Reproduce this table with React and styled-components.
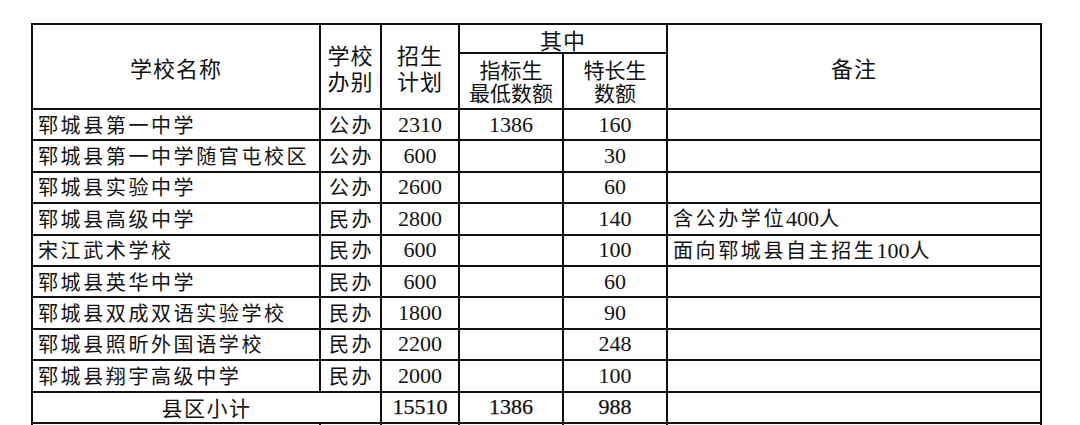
import styled, { createGlobalStyle } from 'styled-components';

const GlobalStyle = createGlobalStyle`
  html, body {
    margin: 0;
    padding: 0;
    background: #fff;
    height: 425px;
    overflow: hidden;
  }
  body {
    font-family: "Noto Sans CJK SC", "Noto Sans", sans-serif;
    color: #111;
  }
`;

const schools = [
  { name: '郓城县第一中学', type: '公办', plan: '2310', quota: '1386', special: '160', note: '' },
  { name: '郓城县第一中学随官屯校区', type: '公办', plan: '600', quota: '', special: '30', note: '' },
  { name: '郓城县实验中学', type: '公办', plan: '2600', quota: '', special: '60', note: '' },
  { name: '郓城县高级中学', type: '民办', plan: '2800', quota: '', special: '140', note: '含公办学位400人' },
  { name: '宋江武术学校', type: '民办', plan: '600', quota: '', special: '100', note: '面向郓城县自主招生100人' },
  { name: '郓城县英华中学', type: '民办', plan: '600', quota: '', special: '60', note: '' },
  { name: '郓城县双成双语实验学校', type: '民办', plan: '1800', quota: '', special: '90', note: '' },
  { name: '郓城县照昕外国语学校', type: '民办', plan: '2200', quota: '', special: '248', note: '' },
  { name: '郓城县翔宇高级中学', type: '民办', plan: '2000', quota: '', special: '100', note: '' },
];

// 备注里数字和汉字字体不同，拆开排
function Note({ text }) {
  const parts = text.split(/(\d+)/).filter(Boolean);
  return parts.map((p, i) => (/^\d+$/.test(p) ? <Num key={i}>{p}</Num> : <span key={i}>{p}</span>));
}

export default function App() {
  return (
    <>
      <GlobalStyle />
      <Page>
        <Table>
          <colgroup>
            <col style={{ width: 288 }} />
            <col style={{ width: 61 }} />
            <col style={{ width: 78 }} />
            <col style={{ width: 104 }} />
            <col style={{ width: 104 }} />
            <col style={{ width: 374 }} />
          </colgroup>
          <thead>
            <HeadRow $h={29}>
              <HeadCell rowSpan={2}>学校名称</HeadCell>
              <HeadCell rowSpan={2} $stack>学校<br />办别</HeadCell>
              <HeadCell rowSpan={2} $stack>招生<br />计划</HeadCell>
              <HeadCell colSpan={2}>其中</HeadCell>
              <HeadCell rowSpan={2}>备注</HeadCell>
            </HeadRow>
            <HeadRow $h={56}>
              <HeadCell $sub>指标生<br />最低数额</HeadCell>
              <HeadCell $sub>特长生<br />数额</HeadCell>
            </HeadRow>
          </thead>
          <tbody>
            {schools.map((s) => (
              <Row key={s.name}>
                <NameCell>{s.name}</NameCell>
                <TypeCell>{s.type}</TypeCell>
                <NumCell>{s.plan}</NumCell>
                <NumCell>{s.quota}</NumCell>
                <NumCell>{s.special}</NumCell>
                <NoteCell><Note text={s.note} /></NoteCell>
              </Row>
            ))}
            <Row>
              <TotalLabel colSpan={2}>县区小计</TotalLabel>
              <NumCell $heavy>15510</NumCell>
              <NumCell $heavy>1386</NumCell>
              <NumCell $heavy>988</NumCell>
              <NoteCell />
            </Row>
            <Row>
              <NameCell />
              <TypeCell />
              <NumCell />
              <NumCell />
              <NumCell />
              <NoteCell />
            </Row>
          </tbody>
        </Table>
      </Page>
    </>
  );
}

const Page = styled.div`
  padding: 23px 0 0 31px;
`;

const Table = styled.table`
  border-collapse: collapse;
  table-layout: fixed;
  width: 1009px;

  td, th {
    border: 2px solid #111;
    padding: 0;
    overflow: hidden;
    white-space: nowrap;
  }
`;

const HeadRow = styled.tr`
  height: ${(p) => p.$h}px;
`;

const HeadCell = styled.th`
  font-weight: 400;
  text-align: center;
  vertical-align: middle;
  font-size: ${(p) => (p.$sub ? 21 : 22)}px;
  line-height: ${(p) => (p.$sub ? 23 : p.$stack ? 26 : 24)}px;
  letter-spacing: ${(p) => (p.$sub ? 0 : 1)}px;
  padding-top: ${(p) => (p.$sub ? 2 : 0)}px;
`;

const Row = styled.tr`
  height: 31.4px;
`;

const NameCell = styled.td`
  font-size: 20px;
  line-height: 26px;
  letter-spacing: 2.6px;
  padding-left: 5px !important;
  text-align: left;
`;

const TypeCell = styled.td`
  font-size: 20px;
  line-height: 26px;
  letter-spacing: 2.4px;
  text-align: center;
  text-indent: 2px;
`;

const NumCell = styled.td`
  font-family: "Liberation Serif", "DejaVu Serif", serif;
  font-size: 22px;
  line-height: 26px;
  text-align: center;
  -webkit-text-stroke: ${(p) => (p.$heavy ? '0.25px #111' : '0')};
`;

const NoteCell = styled.td`
  font-size: 20px;
  line-height: 26px;
  letter-spacing: 2.6px;
  padding-left: 5px !important;
  text-align: left;
`;

const Num = styled.span`
  font-family: "Liberation Serif", "DejaVu Serif", serif;
  font-size: 22px;
  letter-spacing: 0;
`;

const TotalLabel = styled.td`
  font-size: 21px;
  line-height: 26px;
  letter-spacing: 1.5px;
  text-align: center;
`;
